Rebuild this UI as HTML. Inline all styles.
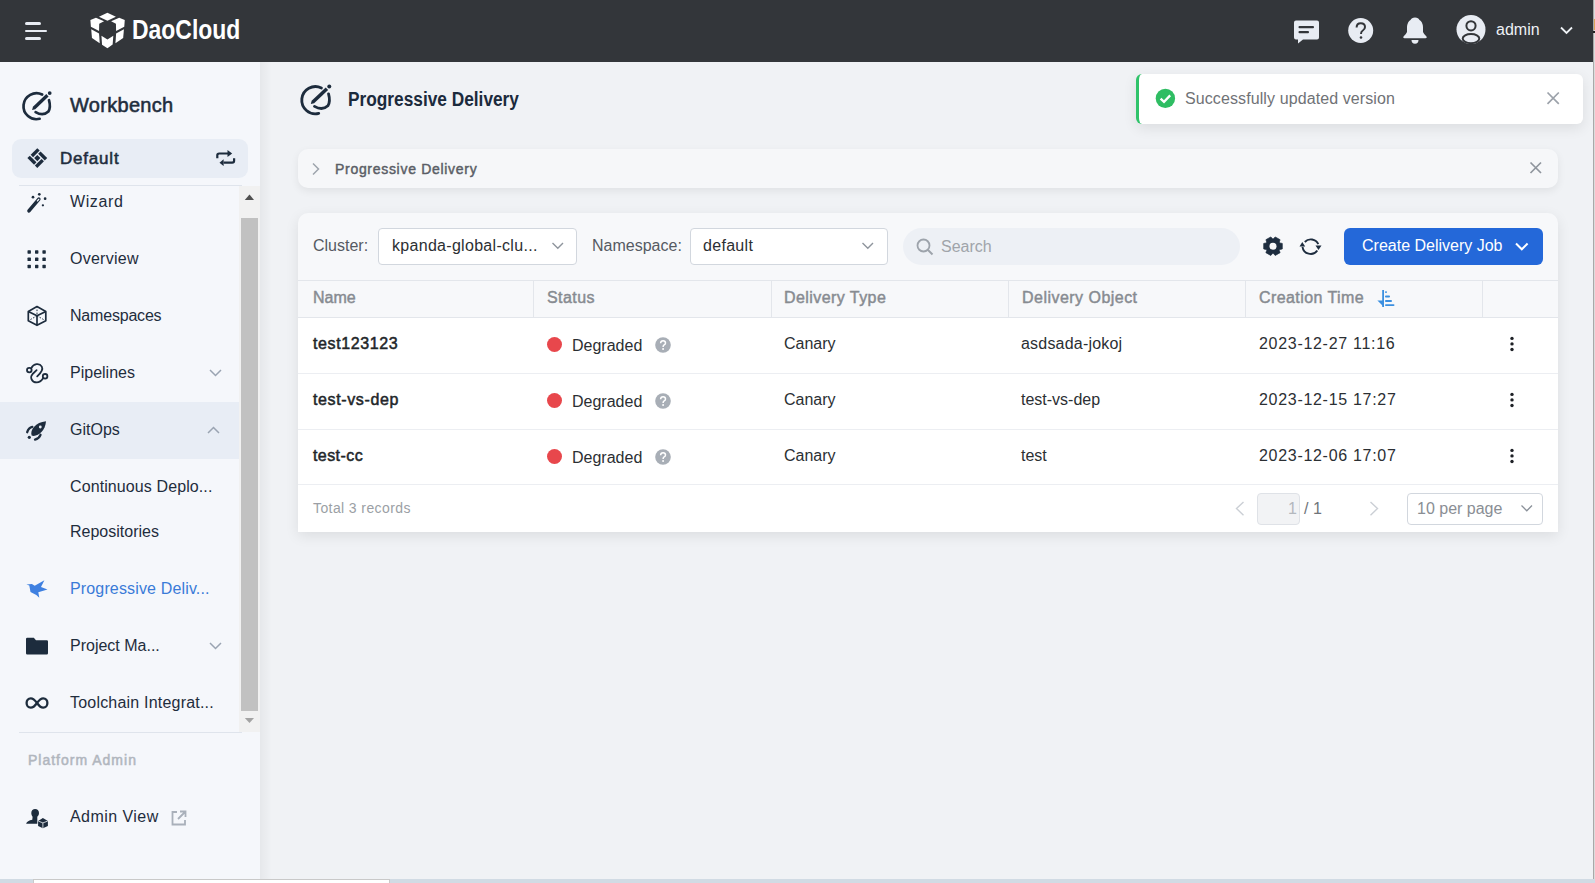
<!DOCTYPE html>
<html><head><meta charset="utf-8">
<style>
*{box-sizing:border-box;margin:0;padding:0}
html,body{width:1595px;height:883px;overflow:hidden;background:#f0f2f5;font-family:"Liberation Sans",sans-serif;}
.a{position:absolute}
.t{position:absolute;white-space:nowrap;line-height:16px;font-size:16px}
svg{position:absolute;overflow:visible}
#hdr{left:0;top:0;width:1593px;height:62px;background:#33363a}
#side{left:0;top:62px;width:260px;height:817px;background:#f5f7fb}
#sideShadow{left:260px;top:62px;width:12px;height:817px;background:linear-gradient(to right,rgba(0,0,0,0.045),rgba(0,0,0,0))}
.nav{color:#1f2d3d}
.hd{color:#878b91;-webkit-text-stroke:0.45px #878b91}
.sb{-webkit-text-stroke:0.45px currentColor}
.cell{color:#2b2f33}
</style></head>
<body>
<!-- HEADER -->
<div id="hdr" class="a"></div>
<div class="a" style="left:1593px;top:0;width:1px;height:879px;background:#a9a9a9"></div>
<div class="a" style="left:1594px;top:0;width:1px;height:879px;background:#dcdcdc"></div>
<div class="a" style="left:1594px;top:19px;width:1px;height:11px;background:#dba257"></div>
<div class="a" style="left:1593px;top:31px;width:2px;height:2px;background:#222"></div>

<!-- hamburger -->
<div class="a" style="left:25px;top:22px;width:16px;height:3px;border-radius:2px;background:#e8ecf3"></div>
<div class="a" style="left:25px;top:30px;width:22px;height:2px;border-radius:1px;background:#e8ecf3"></div>
<div class="a" style="left:25px;top:37px;width:16px;height:3px;border-radius:2px;background:#e8ecf3"></div>

<!-- logo cube -->
<svg style="left:86px;top:8px" width="44" height="44" viewBox="0 0 883 883">
 <g fill="#fff">
  <polygon points="260,175 430,95 600,175 430,255"/>
  <polygon points="88,242 200,195 362,268 265,318 262,462 98,375"/>
  <polygon points="778,242 666,195 504,268 601,318 604,462 768,375"/>
  <polygon points="105,428 262,512 275,705 120,600"/>
  <polygon points="761,428 604,512 591,705 746,600"/>
  <polygon points="310,555 430,632 548,555 535,730 430,810 322,735"/>
 </g>
</svg>
<div class="t" style="left:132px;top:17px;font-size:27px;line-height:27px;font-weight:bold;color:#fff;transform:scaleX(0.85);transform-origin:0 0">DaoCloud</div>

<!-- header right icons -->
<svg style="left:1292px;top:18px" width="28" height="28" viewBox="0 0 28 28">
 <path d="M4,2.5 H25 Q27,2.5 27,4.5 V19.5 Q27,21.5 25,21.5 H11 L6,25.5 V21.5 H4 Q2,21.5 2,19.5 V4.5 Q2,2.5 4,2.5Z" fill="#e8ecf3"/>
 <rect x="6.5" y="8" width="15.5" height="2.2" rx="1" fill="#33363a"/>
 <rect x="6.5" y="13" width="10.5" height="2.2" rx="1" fill="#33363a"/>
</svg>
<svg style="left:1348px;top:18px" width="26" height="26" viewBox="0 0 26 26">
 <circle cx="12.7" cy="12.5" r="12.5" fill="#e8ecf3"/>
 <path d="M8.6,9.6 Q8.6,5.2 12.8,5.2 Q17,5.2 17,9 Q17,11.2 14.8,12.5 Q13,13.5 13,16" fill="none" stroke="#33363a" stroke-width="2"/>
 <circle cx="13" cy="19.5" r="1.3" fill="#33363a"/>
</svg>
<svg style="left:1402px;top:17px" width="26" height="28" viewBox="0 0 26 28">
 <path d="M13,0.5 Q16.5,0.5 17.5,3 Q20.5,4.5 21,10 L21,15 Q22,17.5 24.5,19.5 Q25.5,21 23.5,21.3 H2.5 Q0.5,21 1.5,19.5 Q4,17.5 5,15 L5,10 Q5.5,4.5 8.5,3 Q9.5,0.5 13,0.5Z" fill="#e8ecf3"/>
 <path d="M9.5,23 H16.5 Q16.5,26.7 13,26.7 Q9.5,26.7 9.5,23Z" fill="#e8ecf3"/>
</svg>
<svg style="left:1456px;top:15px" width="30" height="30" viewBox="0 0 30 30">
 <circle cx="15" cy="14.6" r="14.5" fill="#e8ecf3"/>
 <circle cx="15" cy="10.8" r="4.6" fill="none" stroke="#33363a" stroke-width="2"/>
 <ellipse cx="15" cy="23.6" rx="8.3" ry="4.6" fill="none" stroke="#33363a" stroke-width="2"/>
</svg>
<div class="t" style="left:1496px;top:22px;color:#eef1f5">admin</div>
<svg style="left:1559px;top:25px" width="16" height="12" viewBox="0 0 16 12">
 <path d="M2,2.5 L7.5,8 L13,2.5" fill="none" stroke="#eef1f5" stroke-width="1.8"/>
</svg>

<!-- SIDEBAR -->
<div id="side" class="a"></div>
<div id="sideShadow" class="a"></div>

<!-- workbench icon -->
<svg style="left:18px;top:86px" width="40" height="40" viewBox="0 0 40 40">
 <g fill="none" stroke="#1d2c3d" stroke-width="2.7" stroke-linecap="round">
  <path d="M24.2,8.5 A13,13 0 1 0 21.65,32.8"/>
  <path d="M17.6,26.1 Q25,30.5 30.4,25.5 Q33,21.5 31,14.2"/>
 </g>
 <polygon points="14.1,23.9 17.27,23.13 30.6,10.5 28.3,8 14.93,20.67" fill="#1d2c3d"/>
 <circle cx="31.7" cy="7.1" r="1.9" fill="#1d2c3d"/>
</svg>
<div class="t nav sb" style="left:70px;top:95px;font-size:20px;line-height:20px;letter-spacing:0.3px;-webkit-text-stroke:0.55px #1f2d3d">Workbench</div>

<!-- default box -->
<div class="a" style="left:12px;top:139px;width:236px;height:39px;border-radius:9px;background:#e8edf5"></div>
<svg style="left:24px;top:144px" width="28" height="28" viewBox="0 0 28 28">
 <g transform="translate(13.3,14.1) rotate(45)" fill="#1d2c3d">
  <rect x="-2.4" y="-7" width="9.4" height="3.4"/>
  <rect x="3.6" y="-2.4" width="3.4" height="9.4"/>
  <rect x="-7" y="3.6" width="9.4" height="3.4"/>
  <rect x="-7" y="-7" width="3.4" height="9.4"/>
  <rect x="-2.2" y="-2.2" width="4.4" height="4.4"/>
 </g>
</svg>
<div class="t nav" style="left:60px;top:150px;font-size:17px;line-height:17px;letter-spacing:0.8px;-webkit-text-stroke:0.55px #1f2d3d">Default</div>
<svg style="left:210px;top:144px" width="32" height="28" viewBox="0 0 32 28">
 <g fill="none" stroke="#1d2c3d" stroke-width="2.2">
  <path d="M7.3,14.3 V11 Q7.3,9.5 9.2,9.5 H19"/>
  <path d="M24.1,14.3 V16.8 Q24.1,18.7 22.2,18.7 H13.6"/>
 </g>
 <polygon points="17.5,6 22.2,9.5 17.5,13" fill="#1d2c3d"/>
 <polygon points="13.6,15.2 9.5,18.7 13.6,21.9" fill="#1d2c3d"/>
</svg>
<div class="a" style="left:19px;top:185px;width:223px;height:1px;background:#dfe4ec"></div>

<!-- scrollbar -->
<div class="a" style="left:239px;top:186px;width:21px;height:546px;background:#f1f1f1"></div>
<div class="a" style="left:241px;top:218px;width:17px;height:493px;background:#c1c1c1"></div>
<svg style="left:239px;top:186px" width="21" height="546" viewBox="0 0 21 546">
 <polygon points="5.8,14 10.5,8.6 15,14" fill="#505050"/>
 <polygon points="5.8,531.9 15,531.9 10.5,537" fill="#a3a3a3"/>
</svg>
<div class="a" style="left:19px;top:732px;width:223px;height:1px;background:#dfe4ec"></div>

<!-- GitOps highlight -->
<div class="a" style="left:0;top:402px;width:239px;height:57px;background:#e8edf5"></div>

<!-- nav icons -->
<svg style="left:22px;top:188px" width="30" height="30" viewBox="0 0 30 30">
 <g transform="translate(6.9,23) rotate(-49.8)">
  <rect x="-1.7" y="-1.75" width="18.9" height="3.5" rx="1.75" fill="#1d2c3d"/>
  <rect x="12.6" y="-0.7" width="3.3" height="1.4" rx="0.7" fill="#f5f7fb"/>
 </g>
 <g fill="#1d2c3d"><circle cx="11" cy="9.2" r="1.35"/><circle cx="17.3" cy="6.3" r="1.35"/><circle cx="23.1" cy="10.7" r="1.35"/><circle cx="20.9" cy="17.3" r="1.15"/></g>
</svg>
<svg style="left:27px;top:250px" width="20" height="19" viewBox="0 0 20 19">
 <g fill="#1d2c3d">
  <rect x="0.5" y="0.3" width="3.4" height="3.4" rx="0.6"/><rect x="8" y="0.3" width="3.4" height="3.4" rx="0.6"/><rect x="15.4" y="0.3" width="3.4" height="3.4" rx="0.6"/>
  <rect x="0.5" y="7.6" width="3.4" height="3.4" rx="0.6"/><rect x="8" y="7.6" width="3.4" height="3.4" rx="0.6"/><rect x="15.4" y="7.6" width="3.4" height="3.4" rx="0.6"/>
  <rect x="0.5" y="14.8" width="3.4" height="3.4" rx="0.6"/><rect x="8" y="14.8" width="3.4" height="3.4" rx="0.6"/><rect x="15.4" y="14.8" width="3.4" height="3.4" rx="0.6"/>
 </g>
</svg>
<svg style="left:22px;top:300px" width="30" height="30" viewBox="0 0 30 30">
 <g fill="none" stroke="#1d2c3d" stroke-width="1.7" stroke-linejoin="round">
  <polygon points="15,6.6 23.8,11.4 23.8,20.7 15,25.3 6.3,20.7 6.3,11.4"/>
  <polyline points="6.3,11.4 15,15.8 23.8,11.4"/>
  <line x1="15" y1="15.8" x2="15" y2="25.3"/>
 </g>
 <g stroke="#1d2c3d" stroke-width="1" stroke-dasharray="1.5 1.5"><line x1="15" y1="6.6" x2="15" y2="15.8"/><line x1="15" y1="15.8" x2="8.5" y2="19.5"/><line x1="15" y1="15.8" x2="21.5" y2="19.5"/></g>
</svg>
<svg style="left:22px;top:358px" width="30" height="30" viewBox="0 0 30 30">
 <g fill="none" stroke="#1d2c3d" stroke-width="1.8" stroke-linecap="round">
  <circle cx="7.3" cy="12.1" r="2.3"/>
  <circle cx="23.1" cy="18.3" r="2.3"/>
  <path d="M9.3,10.2 C11.5,5.5 17.5,4.8 19.8,8.6 C21.3,11.3 19.3,14.5 15.2,18.3"/>
  <path d="M14.6,12.1 L10.6,16 C7.8,19 9.3,24.3 14.8,24.4 C17.3,24.4 19.5,22.6 21.1,20.2"/>
 </g>
</svg>
<svg style="left:22px;top:415px" width="30" height="30" viewBox="0 0 30 30">
 <path d="M9.6,20.6 C7.8,15 13.5,7.2 24,6.3 C23.4,16 15.5,22.3 9.6,20.6Z" fill="#1d2c3d"/>
 <circle cx="18.3" cy="12" r="1.4" fill="#e8edf5"/>
 <path d="M5.2,17.2 C6,14.5 8,12.3 10.3,11.8" fill="none" stroke="#1d2c3d" stroke-width="2.3" stroke-linecap="round"/>
 <path d="M13,24.6 C15.5,24 17.6,22.2 18.5,19.8" fill="none" stroke="#1d2c3d" stroke-width="2.3" stroke-linecap="round"/>
 <circle cx="7.3" cy="22.3" r="1.6" fill="#1d2c3d"/>
</svg>
<svg style="left:22px;top:574px" width="30" height="30" viewBox="0 0 30 30">
 <polygon points="4.4,10.4 9.9,9.9 12.7,11.7 22.4,6.3 19,13.1 25.5,15.5 16.3,18.3 17.3,23.8 14.3,21.1 8.5,18 7.3,11.6" fill="#3f80e0"/>
</svg>
<svg style="left:25px;top:636px" width="24" height="20" viewBox="0 0 24 20">
 <path d="M1,3 Q1,1.8 2.2,1.8 H8.8 L11,4.3 H21.8 Q23,4.3 23,5.5 V17.3 Q23,18.5 21.8,18.5 H2.2 Q1,18.5 1,17.3Z" fill="#1d2c3d"/>
</svg>
<svg style="left:25px;top:696px" width="24" height="14" viewBox="0 0 24 14">
 <path d="M12,7 C9.5,3.5 8,2.3 5.8,2.3 C3.2,2.3 1.6,4.5 1.6,7 C1.6,9.5 3.2,11.7 5.8,11.7 C8,11.7 9.5,10.5 12,7 C14.5,3.5 16,2.3 18.2,2.3 C20.8,2.3 22.4,4.5 22.4,7 C22.4,9.5 20.8,11.7 18.2,11.7 C16,11.7 14.5,10.5 12,7Z" fill="none" stroke="#1d2c3d" stroke-width="2.3"/>
</svg>
<svg style="left:22px;top:803px" width="30" height="30" viewBox="0 0 30 30">
 <path d="M9.3,10 C9.3,7.5 11,6 13.1,6 C15.3,6 17,7.5 17,10 C17,11.8 16.2,13 15.3,13.8 L15.3,20.7 L4.1,20.7 C4.8,18.5 7,17.5 10.3,16.8 L10.6,13.7 C9.8,12.8 9.3,11.5 9.3,10Z" fill="#1d2c3d"/>
 <path d="M20.9,15 L25.9,17.9 V23.1 L20.9,25.2 L16.1,23.1 V17.9Z" fill="#1d2c3d"/>
 <path d="M16.3,18.1 L20.9,19.9 L25.7,18.1 M20.9,19.9 V25" fill="none" stroke="#f5f7fb" stroke-width="0.8"/>
</svg>

<!-- nav texts -->
<div class="t nav" style="left:70px;top:194px;letter-spacing:0.6px">Wizard</div>
<div class="t nav" style="left:70px;top:251px;letter-spacing:0.25px">Overview</div>
<div class="t nav" style="left:70px;top:308px;letter-spacing:-0.2px">Namespaces</div>
<div class="t nav" style="left:70px;top:365px">Pipelines</div>
<div class="t nav" style="left:70px;top:422px">GitOps</div>
<div class="t nav" style="left:70px;top:479px;letter-spacing:0.1px">Continuous Deplo...</div>
<div class="t nav" style="left:70px;top:524px">Repositories</div>
<div class="t" style="left:70px;top:581px;color:#3a7bd8;letter-spacing:0.15px">Progressive Deliv...</div>
<div class="t nav" style="left:70px;top:638px">Project Ma...</div>
<div class="t nav" style="left:70px;top:695px;letter-spacing:0.2px">Toolchain Integrat...</div>

<svg style="left:205px;top:365px" width="20" height="14" viewBox="0 0 20 14"><path d="M5,5 L10.5,10.5 L16,5" fill="none" stroke="#9aa4b2" stroke-width="1.5"/></svg>
<svg style="left:203px;top:422px" width="20" height="14" viewBox="0 0 20 14"><path d="M5,11 L10.5,5.5 L16,11" fill="none" stroke="#9aa4b2" stroke-width="1.5"/></svg>
<svg style="left:205px;top:638px" width="20" height="14" viewBox="0 0 20 14"><path d="M5,5 L10.5,10.5 L16,5" fill="none" stroke="#9aa4b2" stroke-width="1.5"/></svg>

<div class="t" style="left:28px;top:753px;font-size:14px;line-height:14px;color:#b1b6be;letter-spacing:1px;-webkit-text-stroke:0.5px #b1b6be">Platform Admin</div>
<div class="t nav" style="left:70px;top:809px;letter-spacing:0.45px">Admin View</div>
<svg style="left:170px;top:809px" width="18" height="18" viewBox="0 0 18 18">
 <path d="M7,3 H2.5 V15.5 H15 V11" fill="none" stroke="#a9b0ba" stroke-width="1.8"/>
 <path d="M8,10 L15,3 M10,2.5 H15.5 V8" fill="none" stroke="#a9b0ba" stroke-width="1.8"/>
</svg>

<!-- bottom taskbar strip -->
<div class="a" style="left:0;top:879px;width:1595px;height:4px;background:#d1dbe4"></div>
<div class="a" style="left:33px;top:879px;width:357px;height:4px;background:#fff;border-top:1px solid #c9c9c9;border-left:1px solid #c9c9c9;border-right:1px solid #c9c9c9"></div>

<!-- MAIN -->
<svg style="left:296px;top:79px" width="42" height="42" viewBox="0 0 40 40">
 <g fill="none" stroke="#1d2c3d" stroke-width="2.7" stroke-linecap="round">
  <path d="M24.2,8.5 A13,13 0 1 0 21.65,32.8"/>
  <path d="M17.6,26.1 Q25,30.5 30.4,25.5 Q33,21.5 31,14.2"/>
 </g>
 <polygon points="14.1,23.9 17.27,23.13 30.6,10.5 28.3,8 14.93,20.67" fill="#1d2c3d"/>
 <circle cx="31.7" cy="7.1" r="1.9" fill="#1d2c3d"/>
</svg>
<div class="t" style="left:348px;top:89.5px;font-size:19.5px;line-height:19.5px;font-weight:bold;color:#1b2a3c;transform:scaleX(0.886);transform-origin:0 0">Progressive Delivery</div>

<!-- breadcrumb -->
<div class="a" style="left:298px;top:149px;width:1260px;height:39px;border-radius:10px;background:#f6f7f9;box-shadow:0 3px 9px rgba(0,0,0,0.07)"></div>
<svg style="left:308px;top:160px" width="16" height="18" viewBox="0 0 16 18"><path d="M5,3.5 L10.5,9 L5,14.5" fill="none" stroke="#9ea4ad" stroke-width="1.5"/></svg>
<div class="t" style="left:335px;top:162px;font-size:14px;line-height:14px;font-weight:normal;-webkit-text-stroke:0.45px #5a5e66;color:#5a5e66;letter-spacing:0.7px">Progressive Delivery</div>
<svg style="left:1526px;top:158px" width="20" height="20" viewBox="0 0 20 20"><path d="M4.5,4.5 L15,15 M15,4.5 L4.5,15" stroke="#8f959d" stroke-width="1.7"/></svg>

<!-- card -->
<div class="a" style="left:298px;top:213px;width:1260px;height:319px;border-radius:10px 10px 0 0;background:#f7f8fa;box-shadow:0 4px 14px rgba(0,0,0,0.085)"></div>
<div class="a" style="left:298px;top:317px;width:1260px;height:215px;background:#fff"></div>
<div class="a" style="left:298px;top:280px;width:1260px;height:1px;background:#e3e6eb"></div>
<div class="a" style="left:298px;top:317px;width:1260px;height:1px;background:#e3e6eb"></div>
<div class="a" style="left:298px;top:373px;width:1260px;height:1px;background:#eceef2"></div>
<div class="a" style="left:298px;top:429px;width:1260px;height:1px;background:#eceef2"></div>
<div class="a" style="left:298px;top:484px;width:1260px;height:1px;background:#eceef2"></div>
<div class="a" style="left:533px;top:281px;width:1px;height:36px;background:#e3e6eb"></div>
<div class="a" style="left:771px;top:281px;width:1px;height:36px;background:#e3e6eb"></div>
<div class="a" style="left:1008px;top:281px;width:1px;height:36px;background:#e3e6eb"></div>
<div class="a" style="left:1245px;top:281px;width:1px;height:36px;background:#e3e6eb"></div>
<div class="a" style="left:1482px;top:281px;width:1px;height:36px;background:#e3e6eb"></div>

<!-- toolbar -->
<div class="t" style="left:313px;top:238px;color:#555a62">Cluster:</div>
<div class="a" style="left:378px;top:228px;width:199px;height:37px;border:1px solid #d2d7de;border-radius:4px;background:#fff"></div>
<div class="t" style="left:392px;top:238px;color:#2c2f33;letter-spacing:0.3px">kpanda-global-clu...</div>
<svg style="left:548px;top:238px" width="20" height="16" viewBox="0 0 20 16"><path d="M4.5,5 L9.8,10.3 L15,5" fill="none" stroke="#8f959d" stroke-width="1.4"/></svg>
<div class="t" style="left:592px;top:238px;color:#555a62">Namespace:</div>
<div class="a" style="left:690px;top:228px;width:198px;height:37px;border:1px solid #d2d7de;border-radius:4px;background:#fff"></div>
<div class="t" style="left:703px;top:238px;color:#2c2f33;letter-spacing:0.3px">default</div>
<svg style="left:858px;top:238px" width="20" height="16" viewBox="0 0 20 16"><path d="M4.5,5 L9.8,10.3 L15,5" fill="none" stroke="#8f959d" stroke-width="1.4"/></svg>
<div class="a" style="left:903px;top:228px;width:337px;height:37px;border-radius:19px;background:#edf0f5"></div>
<svg style="left:914px;top:236px" width="22" height="22" viewBox="0 0 22 22"><circle cx="9.5" cy="9.5" r="6" fill="none" stroke="#9da3ab" stroke-width="1.8"/><path d="M14,14 L18.5,18.5" stroke="#9da3ab" stroke-width="2"/></svg>
<div class="t" style="left:941px;top:239px;color:#a0a4aa">Search</div>

<svg style="left:1261px;top:234px" width="24" height="24" viewBox="0 0 24 24">
 <path d="M19.10,8.54 L21.75,9.02 L21.75,14.98 L19.10,15.46 L18.55,16.42 L19.46,18.96 L14.29,21.94 L12.55,19.88 L11.45,19.88 L9.71,21.94 L4.54,18.96 L5.45,16.42 L4.90,15.46 L2.25,14.98 L2.25,9.02 L4.90,8.54 L5.45,7.58 L4.54,5.04 L9.71,2.06 L11.45,4.12 L12.55,4.12 L14.29,2.06 L19.46,5.04 L18.55,7.58Z" fill="#1e2d3f" stroke="#1e2d3f" stroke-width="0.8" stroke-linejoin="round" transform="translate(12,12.2) scale(0.95 0.93) translate(-12,-12)"/>
 <circle cx="12" cy="12.2" r="3.5" fill="#f7f8fa"/>
</svg>
<svg style="left:1298px;top:234px" width="26" height="24" viewBox="0 0 26 24">
 <path d="M6.8,8 A8.2,8.2 0 0 1 20.3,10.2" fill="none" stroke="#1e2d3f" stroke-width="1.9"/>
 <path d="M19.3,16.5 A8.2,8.2 0 0 1 4.5,12.8" fill="none" stroke="#1e2d3f" stroke-width="1.9"/>
 <polygon points="1.5,12.5 4.3,8 7.2,12.5" fill="#1e2d3f"/>
 <polygon points="17.5,11.5 23.5,11.5 20.5,16" fill="#1e2d3f"/>
</svg>
<div class="a" style="left:1344px;top:228px;width:199px;height:37px;border-radius:6px;background:#2468d9"></div>
<div class="t" style="left:1362px;top:238px;color:#fff">Create Delivery Job</div>
<svg style="left:1512px;top:239px" width="20" height="16" viewBox="0 0 20 16"><path d="M4,4.5 L9.8,10.3 L15.6,4.5" fill="none" stroke="#fff" stroke-width="2"/></svg>

<!-- table header -->
<div class="t hd" style="left:313px;top:290px">Name</div>
<div class="t hd" style="left:547px;top:290px;letter-spacing:0.45px">Status</div>
<div class="t hd" style="left:784px;top:290px;letter-spacing:0.43px">Delivery Type</div>
<div class="t hd" style="left:1022px;top:290px;letter-spacing:0.47px">Delivery Object</div>
<div class="t hd" style="left:1259px;top:290px;letter-spacing:0.42px">Creation Time</div>
<svg style="left:1374px;top:288px" width="24" height="22" viewBox="0 0 24 22">
 <rect x="8.2" y="2" width="1.8" height="17" fill="#3b8fe0"/>
 <polygon points="3.4,12.4 10,12.4 10,19" fill="#3b8fe0"/>
 <rect x="11" y="3.2" width="2" height="1.8" rx="0.9" fill="#3b8fe0"/>
 <rect x="11" y="7.6" width="5" height="1.8" rx="0.9" fill="#3b8fe0"/>
 <rect x="11" y="12.1" width="7" height="1.8" rx="0.9" fill="#3b8fe0"/>
 <rect x="11" y="16.2" width="9.5" height="1.8" rx="0.9" fill="#3b8fe0"/>
</svg>

<!-- rows -->
<div class="t cell" style="left:313px;top:335.5px;letter-spacing:0.62px;color:#222629;-webkit-text-stroke:0.5px #222629">test123123</div>
<div class="t cell" style="left:313px;top:391.5px;letter-spacing:0.62px;color:#222629;-webkit-text-stroke:0.5px #222629">test-vs-dep</div>
<div class="t cell" style="left:313px;top:447.5px;letter-spacing:0.42px;color:#222629;-webkit-text-stroke:0.5px #222629">test-cc</div>

<div class="a" style="left:547px;top:337px;width:15px;height:15px;border-radius:50%;background:#e8474c"></div>
<div class="a" style="left:547px;top:393px;width:15px;height:15px;border-radius:50%;background:#e8474c"></div>
<div class="a" style="left:547px;top:449px;width:15px;height:15px;border-radius:50%;background:#e8474c"></div>
<div class="t cell" style="left:572px;top:338px">Degraded</div>
<div class="t cell" style="left:572px;top:394px">Degraded</div>
<div class="t cell" style="left:572px;top:450px">Degraded</div>
<svg style="left:655px;top:337px" width="16" height="16" viewBox="0 0 16 16"><circle cx="8" cy="8" r="7.8" fill="#a8aeb6"/><path d="M5.6,6.3 Q5.6,3.7 8.1,3.7 Q10.5,3.7 10.5,6 Q10.5,7.2 9.2,7.9 Q8.1,8.5 8.1,9.9" fill="none" stroke="#fff" stroke-width="1.5"/><circle cx="8.1" cy="12" r="0.95" fill="#fff"/></svg>
<svg style="left:655px;top:393px" width="16" height="16" viewBox="0 0 16 16"><circle cx="8" cy="8" r="7.8" fill="#a8aeb6"/><path d="M5.6,6.3 Q5.6,3.7 8.1,3.7 Q10.5,3.7 10.5,6 Q10.5,7.2 9.2,7.9 Q8.1,8.5 8.1,9.9" fill="none" stroke="#fff" stroke-width="1.5"/><circle cx="8.1" cy="12" r="0.95" fill="#fff"/></svg>
<svg style="left:655px;top:449px" width="16" height="16" viewBox="0 0 16 16"><circle cx="8" cy="8" r="7.8" fill="#a8aeb6"/><path d="M5.6,6.3 Q5.6,3.7 8.1,3.7 Q10.5,3.7 10.5,6 Q10.5,7.2 9.2,7.9 Q8.1,8.5 8.1,9.9" fill="none" stroke="#fff" stroke-width="1.5"/><circle cx="8.1" cy="12" r="0.95" fill="#fff"/></svg>

<div class="t cell" style="left:784px;top:336px">Canary</div>
<div class="t cell" style="left:784px;top:392px">Canary</div>
<div class="t cell" style="left:784px;top:448px">Canary</div>
<div class="t cell" style="left:1021px;top:336px;letter-spacing:0.2px">asdsada-jokoj</div>
<div class="t cell" style="left:1021px;top:392px">test-vs-dep</div>
<div class="t cell" style="left:1021px;top:448px">test</div>
<div class="t cell" style="left:1259px;top:336px;letter-spacing:0.7px">2023-12-27 11:16</div>
<div class="t cell" style="left:1259px;top:392px;letter-spacing:0.7px">2023-12-15 17:27</div>
<div class="t cell" style="left:1259px;top:448px;letter-spacing:0.7px">2023-12-06 17:07</div>

<svg style="left:1508px;top:335px" width="8" height="18" viewBox="0 0 8 18"><g fill="#1e2126"><circle cx="4" cy="3.4" r="1.7"/><circle cx="4" cy="8.9" r="1.7"/><circle cx="4" cy="14.5" r="1.7"/></g></svg>
<svg style="left:1508px;top:390.5px" width="8" height="18" viewBox="0 0 8 18"><g fill="#1e2126"><circle cx="4" cy="3.4" r="1.7"/><circle cx="4" cy="8.9" r="1.7"/><circle cx="4" cy="14.5" r="1.7"/></g></svg>
<svg style="left:1508px;top:446.5px" width="8" height="18" viewBox="0 0 8 18"><g fill="#1e2126"><circle cx="4" cy="3.4" r="1.7"/><circle cx="4" cy="8.9" r="1.7"/><circle cx="4" cy="14.5" r="1.7"/></g></svg>

<!-- footer -->
<div class="t" style="left:313px;top:501px;font-size:14px;line-height:14px;color:#9b9fa5;letter-spacing:0.4px">Total 3 records</div>
<svg style="left:1230px;top:500px" width="18" height="18" viewBox="0 0 18 18"><path d="M13.5,2 L6.5,8.6 L13.5,15.2" fill="none" stroke="#cbcfd5" stroke-width="1.4"/></svg>
<div class="a" style="left:1257px;top:493px;width:43px;height:32px;border:1px solid #dfe2e7;border-radius:4px;background:#f2f3f5"></div>
<div class="t" style="left:1288px;top:501px;color:#b4b8be">1</div>
<div class="t" style="left:1304px;top:501px;color:#6f747a">/ 1</div>
<svg style="left:1365px;top:500px" width="18" height="18" viewBox="0 0 18 18"><path d="M5.5,2 L12.5,8.6 L5.5,15.2" fill="none" stroke="#cbcfd5" stroke-width="1.4"/></svg>
<div class="a" style="left:1407px;top:493px;width:136px;height:32px;border:1px solid #d2d7de;border-radius:4px;background:#fff"></div>
<div class="t" style="left:1417px;top:501px;color:#8a8e94">10 per page</div>
<svg style="left:1517px;top:501px" width="20" height="16" viewBox="0 0 20 16"><path d="M4.5,4.5 L9.8,9.8 L15,4.5" fill="none" stroke="#8a9099" stroke-width="1.3"/></svg>

<!-- toast -->
<div class="a" style="left:1136px;top:74px;width:447px;height:50px;border-radius:6px;background:#fff;box-shadow:0 4px 14px rgba(0,0,0,0.09);border-left:3px solid #2fc36a"></div>
<svg style="left:1155px;top:88px" width="21" height="21" viewBox="0 0 21 21"><circle cx="10.4" cy="10.4" r="9.7" fill="#2fbd63"/><path d="M5.6,10.6 L9,13.8 L15.2,7.4" fill="none" stroke="#fff" stroke-width="2.3"/></svg>
<div class="t" style="left:1185px;top:91px;color:#707276;letter-spacing:0.1px">Successfully updated version</div>
<svg style="left:1543px;top:88px" width="20" height="20" viewBox="0 0 20 20"><path d="M4.5,4.5 L15.8,15.8 M15.8,4.5 L4.5,15.8" stroke="#9ca2aa" stroke-width="1.7"/></svg>

</body></html>
